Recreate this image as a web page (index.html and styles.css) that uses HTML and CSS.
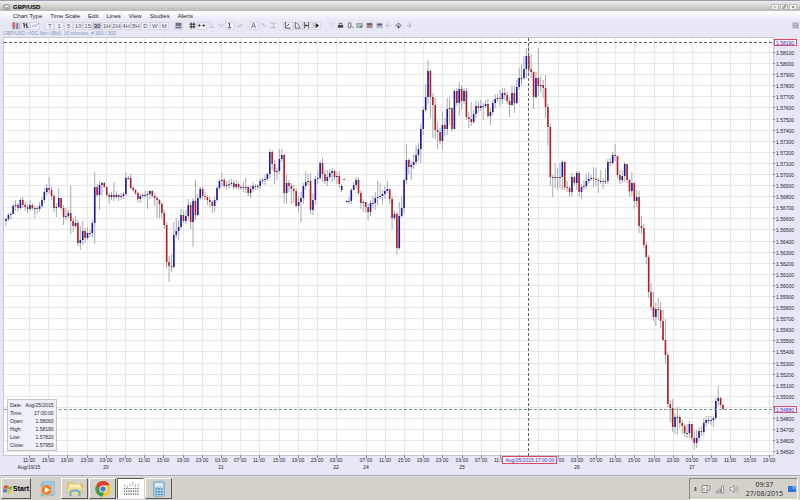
FILE: index.html
```html
<!DOCTYPE html>
<html lang="en">

<head>
  <meta charset="utf-8">
  <title>GBP/USD</title>
  <meta name="viewport" content="width=device-width, initial-scale=1.0">
  <link rel="stylesheet" href="styles.css">
</head>

<body>
  <div class="window">
    <header class="title-bar">
      <svg class="title-icon" viewBox="0 0 8 6"><rect x="1" y=".5" width="6" height="5" rx="1" fill="#eee" stroke="#777"/><path d="M2 4h4" stroke="#777"/></svg>
      <h1>GBP/USD</h1>
      <div class="window-buttons">
        <button aria-label="Minimize"><svg viewBox="0 0 8 6"><path d="M2 3h4"/></svg></button>
        <button aria-label="Restore"><svg viewBox="0 0 8 6"><path d="M2 2.500h3v2.500h-3zM4 1h3v2"/></svg></button>
        <button aria-label="Close"><svg viewBox="0 0 8 6"><path d="M2.500 1.500l3 3M5.500 1.500l-3 3"/></svg></button>
      </div>
    </header>
    <nav class="menu">
      <button>Chart Type</button>
      <button>Time Scale</button>
      <button>Edit</button>
      <button>Lines</button>
      <button>View</button>
      <button>Studies</button>
      <button>Alerts</button>
    </nav>
    <div class="toolbar">
      <div class="group group-3">
        <button class="pressed" aria-label="Candles"><svg viewBox="0 0 8 8"><path d="M2 0v8M6 1v7" stroke="#555"/><path d="M2 1v5" stroke="#d8663c" stroke-width="2.500"/><path d="M6 2v5" stroke="#7480c4" stroke-width="2"/></svg></button>
        <button aria-label="Bars"><svg viewBox="0 0 8 8"><path d="M2.500 1v6M1 2h1.500M5.500 1v6M5.500 6h2M2.500 4h1.500M4 3h1.500" stroke="#222"/></svg></button>
        <button aria-label="Line"><svg viewBox="0 0 8 8"><path d="M0 6l2.500-2.500 2 1.500 3.500-4" stroke="#8890ac"/></svg></button>
      </div>
      <div class="group group-13">
        <button>T</button>
        <button>1</button>
        <button>5</button>
        <button>10</button>
        <button>15</button>
        <button class="pressed">30</button>
        <button>1H</button>
        <button>2H</button>
        <button>4H</button>
        <button>8H</button>
        <button>D</button>
        <button>W</button>
        <button>M</button>
      </div>
      <div class="group group-1">
        <button class="pressed" aria-label="Data window"><svg viewBox="0 0 8 8"><rect x="1" y="1" width="6" height="6" fill="#6d7087"/><path d="M1 5h6" stroke="#c9cbe0"/></svg></button>
      </div>
      <div class="group group-6">
        <button class="flat" aria-label="Grid"><svg viewBox="0 0 8 8"><path d="M2.500 0.500v7M5.500 .5v7M.5 2.500h7M.5 5.500h7" stroke="#222"/></svg></button>
        <button aria-label="Fit width"><svg viewBox="0 0 8 8"><path d="M0 4h3M5 4h3M1.500 2.500v3M6.500 2.500v3" stroke="#333"/></svg></button>
        <button class="off" aria-label="Trend line"><svg viewBox="0 0 8 8"><path d="M2 1l3 4M1 6h6" stroke="#777"/></svg></button>
        <button class="off" aria-label="Ray"><svg viewBox="0 0 8 8"><path d="M1 2l5 4M5 3h2" stroke="#777"/></svg></button>
        <button aria-label="Vertical line"><svg viewBox="0 0 8 8"><path d="M4 1v5M2.500 2h1.500M2 6.500h4" stroke="#444"/></svg></button>
        <button class="off" aria-label="Delete line"><svg viewBox="0 0 8 8"><path d="M1 5h6M4 3h3" stroke="#777"/></svg></button>
      </div>
      <div class="group group-3">
        <button aria-label="Text"><svg viewBox="0 0 8 8"><path d="M1.500 7l2.500-6 2.500 6M2.500 5h3" stroke="#777"/></svg></button>
        <button class="off" aria-label="Arrow"><svg viewBox="0 0 8 8"><path d="M2 2l4 3M2 2h2" stroke="#777"/></svg></button>
        <button class="off" aria-label="Levels"><svg viewBox="0 0 8 8"><path d="M1 1.500h6M1 6.500h6M4 2v4" stroke="#777"/></svg></button>
      </div>
      <div class="group group-4">
        <button aria-label="Zoom line"><svg viewBox="0 0 8 8"><path d="M1.500 0v7h6M3 5l3-3" stroke="#444"/></svg></button>
        <button aria-label="Zoom area"><svg viewBox="0 0 8 8"><path d="M1.500 0v7h6M3 1l3 3v2" stroke="#555"/></svg></button>
        <button aria-label="Bar spacing"><svg viewBox="0 0 8 8"><path d="M1.500 0v7.500M6.500 0v7.500M1.500 4h5M3.500 2v4" stroke="#444"/></svg></button>
        <button aria-label="Play"><svg viewBox="0 0 8 8"><path d="M3 1l4 3-4 3z" fill="#222"/><path d="M1 1v6" stroke="#999"/></svg></button>
      </div>
      <div class="group group-9">
        <button class="off" aria-label="Pointer"><svg viewBox="0 0 8 8"><path d="M3 2h3M4 4h2" stroke="#999"/></svg></button>
        <button class="flat" aria-label="Print"><svg viewBox="0 0 8 8"><path d="M1 3.500h6v3h-6z" fill="#444"/><path d="M2.500 3v-1.500h3v1.500" stroke="#555"/></svg></button>
        <button class="flat" aria-label="Preview"><svg viewBox="0 0 8 8"><path d="M1.500 1h3v5.500h-3zM4.500 4l3 3" stroke="#777"/></svg></button>
        <button class="flat" aria-label="Save picture"><svg viewBox="0 0 8 8"><rect x="1" y="2" width="6" height="4" fill="#bcd3bf" stroke="#788"/><path d="M4 5h3" stroke="#276b37"/></svg></button>
        <button class="flat" aria-label="Sell"><svg viewBox="0 0 8 8"><rect x=".5" y="1" width="7" height="6" fill="#b88c98"/><path d="M1 2.500h6M3 1v3M5.500 1v3" stroke="#556"/></svg></button>
        <button class="flat" aria-label="Buy"><svg viewBox="0 0 8 8"><rect x=".5" y="1" width="7" height="6" fill="#b4b8d8"/><path d="M1 3h6M3 1.500v3M5.500 1.500v3" stroke="#556"/></svg></button>
        <button class="flat off" aria-label="Back"><svg viewBox="0 0 8 8"><path d="M4 1.500l-3 2.500 3 2.500M1.500 4h5" stroke="#777"/></svg></button>
        <button class="flat" aria-label="Home"><svg viewBox="0 0 8 8"><path d="M1 4l3-3 3 3-3 3z" fill="#ccc" stroke="#667"/><path d="M4 4v3" stroke="#334"/></svg></button>
        <button class="flat off" aria-label="Forward"><svg viewBox="0 0 8 8"><path d="M4 1.500l3 2.500-3 2.500M6.500 4h-5" stroke="#777"/></svg></button>
      </div>
      <button class="panel-button" aria-label="Panel"><svg viewBox="0 0 8 8"><path d="M1.500 2h5v4h-5zM2 4h4" stroke="#999"/></svg></button>
    </div>
    <p class="series">GBP/USD &lt;IDC lite&gt; (Bid), 30 minutes, # 300 / 300</p>
    <main class="chart">
      <svg id="plot" viewBox="0 37 800 438" role="img" aria-label="GBP/USD 30 minute candles"></svg>
      <dl class="quote">
        <dt>Date:</dt><dd>Aug/25/2015</dd>
        <dt>Time:</dt><dd>17:00:00</dd>
        <dt>Open:</dt><dd>1.58060</dd>
        <dt>High:</dt><dd>1.58190</dd>
        <dt>Low:</dt><dd>1.57820</dd>
        <dt>Close:</dt><dd>1.57950</dd>
      </dl>
    </main>
  </div>
  <footer class="taskbar">
    <button class="start">
      <svg viewBox="0 0 10 10"><path d="M1 2q2-1.500 4 0l-.6 3q-2-1.200-4 0z" fill="#e2502c"/><path d="M5.400 2.200q2 1 4-.2l-.6 3q-2 1.200-4 0z" fill="#74b43a"/><path d="M.3 5.500q2-1.200 4 0l-.6 3q-2-1.200-3.700 0z" fill="#3d7fd0"/><path d="M4.700 5.700q2 1 4 0l-.6 3q-2 1-4 0z" fill="#f0bd2e"/></svg>
      Start
    </button>
    <div class="tasks">
      <button class="task plain" aria-label="Media Player"><svg viewBox="0 0 20 20"><rect x="5" y="2" width="13" height="15" rx="1" fill="#a8d4ee" stroke="#76b2d8"/><rect x="3" y="4" width="13" height="14" rx="1" fill="#7fbce4"/><circle cx="9.500" cy="11" r="6" fill="#ef7a1e" stroke="#f9d4ac"/><path d="M7.500 7.500l6 3.500-6 3.500z" fill="#fff"/></svg></button>
      <button class="task" aria-label="Explorer"><svg viewBox="0 0 20 20"><path d="M2 3h6l1.500 2h8.500v11h-16z" fill="#f0d070" stroke="#d8b04c"/><path d="M4 5h12v5h-12z" fill="#fff4ba"/><path d="M2 8h16v9h-16z" fill="#f5dc8c"/><path d="M5 18v-5q5-3 10 0v5" fill="none" stroke="#6db2de" stroke-width="2.500"/></svg></button>
      <button class="task" aria-label="Chrome"><svg viewBox="0 0 20 20"><circle cx="10" cy="10" r="8.500" fill="#f4c92f"/><path d="M2.600 5.800a8.500 8.500 0 0 1 15-.2l-7.600 .4-4 6.500z" fill="#d8402f"/><path d="M2.600 5.800l4 6.700 5 1.500-2.600 4.500a8.500 8.500 0 0 1-6.400-12.700z" fill="#3f9e4d"/><circle cx="10" cy="10" r="4" fill="#fff"/><circle cx="10" cy="10" r="3" fill="#3e83d8"/></svg></button>
      <button class="task active" aria-label="Chart"><svg viewBox="0 0 20 20"><path d="M3 5v3M6 6v3M9 4v3M12 2v5M15 5v3M18 4v4" stroke="#aaa"/><path d="M2 9.500h17M2 12.500h17M2 15.500h17" stroke="#777" stroke-width="1.500" stroke-dasharray="1.500 1"/></svg></button>
      <button class="task" aria-label="Calculator"><svg viewBox="0 0 20 20"><rect x="4" y="2" width="12" height="16" rx="1" fill="#b2d3e8" stroke="#6fa6ca"/><rect x="6" y="4" width="8" height="3" fill="#e9f7ff"/><path d="M6 10h8M6 13h8M6 16h8" stroke="#5089b4" stroke-width="1.500" stroke-dasharray="2 1"/></svg></button>
    </div>
    <div class="tray">
      <svg class="tray-up" viewBox="0 0 4 6"><path d="M0 3l2-2 2 2zM0 5.500l2-2 2 2z" fill="#222"/></svg>
      <svg viewBox="0 0 10 10"><path d="M1 1.500h5v7h-5zM6 2h3v4h-3M3 4v3" fill="#eee" stroke="#888"/></svg>
      <svg viewBox="0 0 10 10"><path d="M1.500 9v-2h1.500v2zM4 9v-4h1.500v4zM6.500 9v-7h2v7z" fill="#eee" stroke="#999"/></svg>
      <svg viewBox="0 0 10 10"><path d="M1 3.500h2l2-2v7l-2-2h-2z" fill="#eee" stroke="#999"/><path d="M6.500 3q1.500 2 0 4M8 1.500q2.500 3.500 0 7" fill="none" stroke="#aaa"/></svg>
      <div class="clock"><time>09:37</time><span>27/08/2015</span></div>
      <svg viewBox="0 0 10 10"><rect x="1" y="2" width="8" height="6" fill="#2e73d8"/><path d="M5 2h4v3h-4z" fill="#5c9bf0"/></svg>
    </div>
  </footer>
  <script src="chart.js"></script>
</body>

</html>
```
FILE: styles.css
```css
:root {
  --panel: rgb(231, 231, 245);
  --line: rgb(168, 168, 188);
  --taskbar: rgb(212, 208, 202);
  --text: rgb(40, 40, 48);
}

* {
  box-sizing: border-box;
}

body {
  margin: 0;
  min-height: 100vh;
  display: flex;
  flex-direction: column;
  background-color: var(--taskbar);
  font-family: "Liberation Sans", Arial, sans-serif;
  font-size: 6px;
  color: var(--text);
}

button {
  font: inherit;
  color: inherit;
  padding: 0;
  border: 0;
  background: none;
  cursor: pointer;
}

svg {
  display: block;
}

.window {
  background-color: var(--panel);
  border-top: 1px solid rgb(160, 158, 176);
  border-bottom: 1px solid var(--line);
}

.title-bar {
  display: flex;
  align-items: center;
  gap: 3px;
  height: 10px;
  padding: 2px 3px 0;
  background: linear-gradient(rgb(238, 238, 238), rgb(186, 186, 184));
}

.title-icon {
  width: 7px;
  height: 6px;
}

h1 {
  margin: 0;
  font-size: 6px;
  line-height: 8px;
  color: black;
}

.window-buttons {
  display: flex;
  gap: 1px;
  margin-left: auto;
}

.window-buttons button {
  width: 8px;
  height: 6px;
  background-color: rgb(240, 240, 240);
  border: 1px solid rgb(190, 190, 194);
}

.window-buttons svg {
  width: 100%;
  height: 100%;
  fill: none;
  stroke: rgb(100, 100, 100);
}

.menu {
  display: flex;
  gap: 8px;
  height: 10px;
  padding-left: 13px;
  background: linear-gradient(white, var(--panel));
}

.menu button {
  line-height: 10px;
}

.toolbar {
  display: flex;
  align-items: center;
  gap: 5px;
  height: 9px;
  padding: 0 1px 0 11px;
}

.group {
  display: grid;
}

.group-1 { grid-template-columns: 9px; }
.group-3 { grid-template-columns: repeat(3, 1fr); width: 29px; }
.group-4 { grid-template-columns: repeat(4, 1fr); width: 38px; }
.group-6 { grid-template-columns: repeat(6, 1fr); width: 56px; }
.group-9 { grid-template-columns: repeat(9, 1fr); width: 87px; }
.group-13 { grid-template-columns: repeat(13, 1fr); width: 124px; }

.group button {
  height: 8px;
  line-height: 6px;
  border: 1px solid rgb(216, 216, 228);
  background-color: rgb(240, 240, 249);
  color: rgb(88, 88, 108);
  display: flex;
  align-items: center;
  justify-content: center;
}

.group .pressed {
  background-color: rgb(196, 196, 218);
  color: rgb(40, 40, 60);
}

.group .flat,
.group .off {
  background: none;
  border-color: transparent;
}

.group .off {
  opacity: .4;
}

.toolbar svg {
  width: 7px;
  height: 7px;
  fill: none;
  flex: none;
}

.panel-button {
  margin-left: auto;
  background-color: rgb(205, 205, 220);
}

.series {
  margin: 0;
  padding-left: 3px;
  font-size: 5px;
  line-height: 7px;
  color: rgb(134, 148, 184);
}

.chart {
  position: relative;
}

#plot {
  width: 100%;
  font-size: 5px;
  fill: rgb(40, 40, 48);
}

.plot-area {
  fill: white;
  stroke: rgb(198, 198, 214);
}

.grid {
  stroke: rgb(232, 232, 233);
}

.tick {
  stroke: rgb(140, 140, 150);
}

.wick {
  stroke: rgb(166, 172, 178);
}

.up {
  fill: rgb(28, 24, 160);
}

.down {
  fill: rgb(180, 28, 34);
}

.cross {
  stroke: rgb(96, 96, 96);
  stroke-dasharray: 3 2;
}

.last-price {
  stroke: rgb(116, 156, 144);
  stroke-dasharray: 3 2;
}

.tag {
  fill: rgb(244, 240, 252);
  stroke: rgb(214, 76, 102);
}

.tag-text {
  fill: rgb(60, 50, 190);
}

.quote {
  position: absolute;
  left: 7px;
  bottom: 24px;
  display: grid;
  grid-template-columns: auto auto;
  column-gap: 1px;
  margin: 0;
  padding: 1px 2px;
  border: 1px solid rgb(196, 196, 208);
  background-color: rgb(240, 240, 248);
  font-size: 5px;
  line-height: 8px;
}

.quote dd {
  margin: 0;
  text-align: right;
}

.taskbar {
  flex: 1;
  display: flex;
  align-items: center;
  min-height: 24px;
  padding: 0 2px 0 1px;
  border-top: 1px solid rgb(228, 225, 220);
}

.start,
.task {
  height: 21px;
  border: 1px solid;
  border-color: white rgb(90, 88, 84) rgb(90, 88, 84) white;
}

.start {
  display: flex;
  align-items: center;
  justify-content: center;
  width: 30px;
  font-size: 7px;
  font-weight: bold;
  color: black;
}

.start svg {
  width: 10px;
  height: 10px;
}

.tasks {
  display: flex;
  gap: 1px;
  margin-left: 2px;
}

.task {
  width: 27px;
  display: flex;
  align-items: center;
  justify-content: center;
}

.task svg {
  width: 18px;
  height: 18px;
}

.task.plain {
  border-color: transparent;
}

.task.active {
  background-color: white;
  border-color: rgb(90, 88, 84) white white rgb(90, 88, 84);
}

.tray {
  display: flex;
  align-items: center;
  gap: 4px;
  height: 22px;
  margin-left: auto;
  padding-left: 4px;
  border: 1px solid;
  border-color: rgb(140, 136, 130) white white rgb(140, 136, 130);
}

.tray svg {
  width: 10px;
  height: 10px;
}

.tray .tray-up {
  width: 3px;
  height: 5px;
}

.clock {
  display: flex;
  flex-direction: column;
  align-items: center;
  padding-left: 3px;
  font-family: "Open Sans", sans-serif;
  font-size: 7px;
  line-height: 9px;
}
```
FILE: chart.js
```javascript
// close, high, low of every 30 minute candle, in chart units
// a fourth value is the open, when it differs from the last close
var candles = [
  [219,218,226,221],[215,213,221],[214,212,220],[206,204,214],[205,200,211],[208,203,212],[200,198,210],[205,197,208],[207,202,211],[209,204,213],
  [205,200,211],[208,203,210],[208,206,218],[209,206,214],[206,202,212],[200,197,208],[192,188,203],[188,184,195],[190,177,194],[196,187,200],
  [208,194,212],[207,203,217],[198,188,208],[208,198,210],[217,205,225],[216,208,220],[213,210,218],[221,186,234],[226,218,232],[223,216,228],
  [243,220,246],[240,226,250],[231,221,245],[238,228,243],[233,227,240],[233,230,237],[223,220,237],[187,172,244],[195,184,197],[185,181,210],
  [183,182,196],[187,182,188],[195,186,197],[197,193,204],[195,192,200],[197,182,201],[195,191,199],[197,194,201],[196,193,200],[194,192,199],
  [178,172,196],[178,176,180],[188,174,189],[190,186,192],[193,189,195],[199,192,203],[196,194,203],[195,193,198],[195,191,198],[194,191,209],
  [191,190,199],[196,190,198],[198,193,206],[200,196,218],[204,199,218],[213,202,219],[225,210,229],[262,222,268],[266,256,282],[267,254,272],
  [235,222,268],[231,218,238],[227,220,240],[215,209,229],[221,210,223],[216,210,224],[205,199,220],[222,202,229],[201,198,247],[215,180,220],
  [198,194,216],[189,187,200],[196,186,199],[197,192,200],[200,195,205],[202,197,207],[206,200,213],[200,197,212],[188,186,202],[181,179,190],
  [180,173,186],[186,178,188],[185,181,190],[184,180,189],[183,179,186],[187,180,190],[184,180,189],[187,182,190],[187,185,190],[188,182,192],
  [187,178,193],[193,186,196],[189,186,198],[186,182,192],[187,184,190],[186,184,190],[181,179,189],[180,177,184],[179,175,185],[174,173,180],
  [152,149,178],[164,150,170],[172,160,184],[171,168,180],[159,149,174],[155,149,162],[193,154,203],[183,174,204],[186,180,192],[189,183,204],
  [191,185,203],[206,188,207],[202,196,212],[198,192,223],[186,183,204],[182,171,190],[181,174,185],[210,173,214],[200,193,215],[179,176,205],
  [178,170,184],[163,161,180],[174,158,182],[181,170,184],[177,170,186],[173,169,179],[171,168,182],[177,170,180],[176,172,184],[184,171,188],
  [186,184,192,190],[180,179,180,179],[201,200,203,202],[201,197,204],[190,188,204],[185,182,190],[180,177,188],[193,178,195],[203,190,209],[202,199,212],
  [207,202,213],[212,204,221],[203,200,216],[203,196,208],[198,192,210],[197,181,206],[196,183,199],[194,190,204],[191,186,199],[189,181,193],
  [199,189,204],[218,196,229],[214,210,220],[248,212,255],[216,202,250],[208,196,218],[180,178,213],[160,144,184],[167,158,174],[165,161,180],
  [162,154,169],[155,145,165],[149,143,161],[129,124,163],[110,107,135],[97,84,112],[71,60,104],[97,70,118],[105,93,138],[130,98,139],
  [132,122,149],[141,128,144],[125,112,150],[129,118,136],[109,98,135],[108,97,125],[129,108,132],[91,89,128],[103,88,106],[89,82,116],
  [101,85,110],[91,88,104],[117,88,120],[119,112,128],[122,102,126],[114,110,124],[106,100,118],[108,102,113],[106,100,111],[106,103,120],
  [104,100,108],[116,99,118],[112,108,125],[103,100,115],[99,94,108],[98,94,102],[99,90,106],[93,88,104],[95,88,100],[101,92,104],
  [105,97,117],[93,86,106],[103,86,113],[87,80,104],[78,68,90],[78,64,86],[69,56,80],[56,48,78],[69,46,74],[72,54,78],
  [97,71,109],[78,72,99],[86,48,96],[85,76,92],[88,80,98],[107,75,118],[127,104,146],[177,124,186],[178,175,197],[177,163,188],
  [178,168,190],[177,163,188],[162,160,190],[187,161,190],[188,181,192],[192,186,197],[177,173,197],[183,176,186],[173,171,190],[192,171,197],
  [187,184,199],[186,180,190],[181,174,189],[179,172,184],[178,175,181],[179,167,187],[180,168,186],[181,178,193],[181,170,184],[182,178,189],
  [181,169,184],[162,159,184],[163,158,166],[155,152,165],[156,144,161],[175,156,178],[180,170,184],[176,170,183],[164,162,182],[180,164,183],
  [191,179,197],[183,172,196],[201,182,209],[197,190,207],[226,191,233],[228,216,234],[245,224,248],[257,242,264],[292,255,298],[307,283,311],
  [317,292,321],[309,303,326],[310,298,320],[321,302,328],[340,310,341],[355,319,364],[404,352,407],[408,400,422],[427,399,432],[417,413,434],
  [417,407,434],[423,415,428],[426,420,434],[433,424,437],[433,424,438],[424,421,438],[438,424,441],[443,430,450],[438,430,448],[431,427,441],
  [432,426,436],[423,418,436],[420,416,427],[420,416,424],[420,416,425],[418,416,427],[401,398,420],[398,386,406],[405,397,408],[409,404,410]
];

var days = { 4: "20", 10: "21", 16: "22", 17: "24", 22: "25", 28: "26", 34: "27" };
var hours = ["11:00", "15:00", "19:00", "23:00", "03:00", "07:00"];
var plot = document.getElementById("plot");

function add(name, attributes, text) {
  var element = document.createElementNS("http://www.w3.org/2000/svg", name);
  for (var key in attributes) {
    element.setAttribute(key, attributes[key]);
  }
  if (text) {
    element.textContent = text;
  }
  plot.appendChild(element);
}

function line(className, x1, y1, x2, y2) {
  add("line", { "class": className, x1: x1, y1: y1, x2: x2, y2: y2 });
}

function label(x, y, text, anchor, className) {
  add("text", { x: x, y: y, "text-anchor": anchor, "class": className || "label" }, text);
}

add("rect", { "class": "plot-area", x: 3.5, y: 37.5, width: 770, height: 418 });

// price scale
for (var i = 0; i <= 36; i++) {
  var y = Math.round(52 + i * 11.09) + 0.5;
  line("grid", 4, y, 773, y);
  line("tick", 773, y, 775, y);
  // the last price tag sits on this one
  if (i != 32) {
    label(776, y + 2, (1.581 - i * 0.001).toFixed(5), "start");
  }
}

// time scale, the weekend takes one and a half steps
for (var j = 0; j < 39; j++) {
  var x = Math.round(j < 17 ? 29 + j * 19.2 : 365.5 + (j - 17) * 19.2);
  if (x > 770) {
    break;
  }
  line("grid", x + 0.5, 38, x + 0.5, 455);
  line("tick", x + 0.5, 455, x + 0.5, 458);
  // no label under the crosshair tag
  if (x < 505 || x > 550) {
    label(x, 462, hours[(j < 17 ? j : j) % 6], "middle");
  }
  if (days[j]) {
    label(x, 469, days[j], "middle");
  }
}
label(29, 469, "Aug/19/15", "middle");

// candles
var last = candles[0][3];
candles.forEach(function (candle, index) {
  var x = 6 + index * 2.398;
  var open = candle[3] || last;
  var close = candle[0];
  line("wick", x, candle[1], x, candle[2]);
  add("rect", {
    "class": close <= open ? "up" : "down",
    x: x - 0.8,
    y: Math.min(open, close),
    width: 1.6,
    height: Math.max(Math.abs(close - open), 1)
  });
  last = close;
});

// crosshair and last price
line("cross", 4, 42.5, 773, 42.5);
line("cross", 528.5, 38, 528.5, 456);
line("last-price", 4, 409.5, 773, 409.5);
add("rect", { "class": "tag", x: 774.5, y: 39.5, width: 22, height: 6 });
label(776, 44.5, "1.58190", "start", "tag-text");
add("rect", { "class": "tag", x: 774.5, y: 406.5, width: 22, height: 6 });
label(776, 411.5, "1.54880", "start", "tag-text");
add("rect", { "class": "tag", x: 502.5, y: 456.5, width: 54, height: 7 });
label(530, 462, "Aug/25/2015 17:00:00", "middle", "tag-text");
```
